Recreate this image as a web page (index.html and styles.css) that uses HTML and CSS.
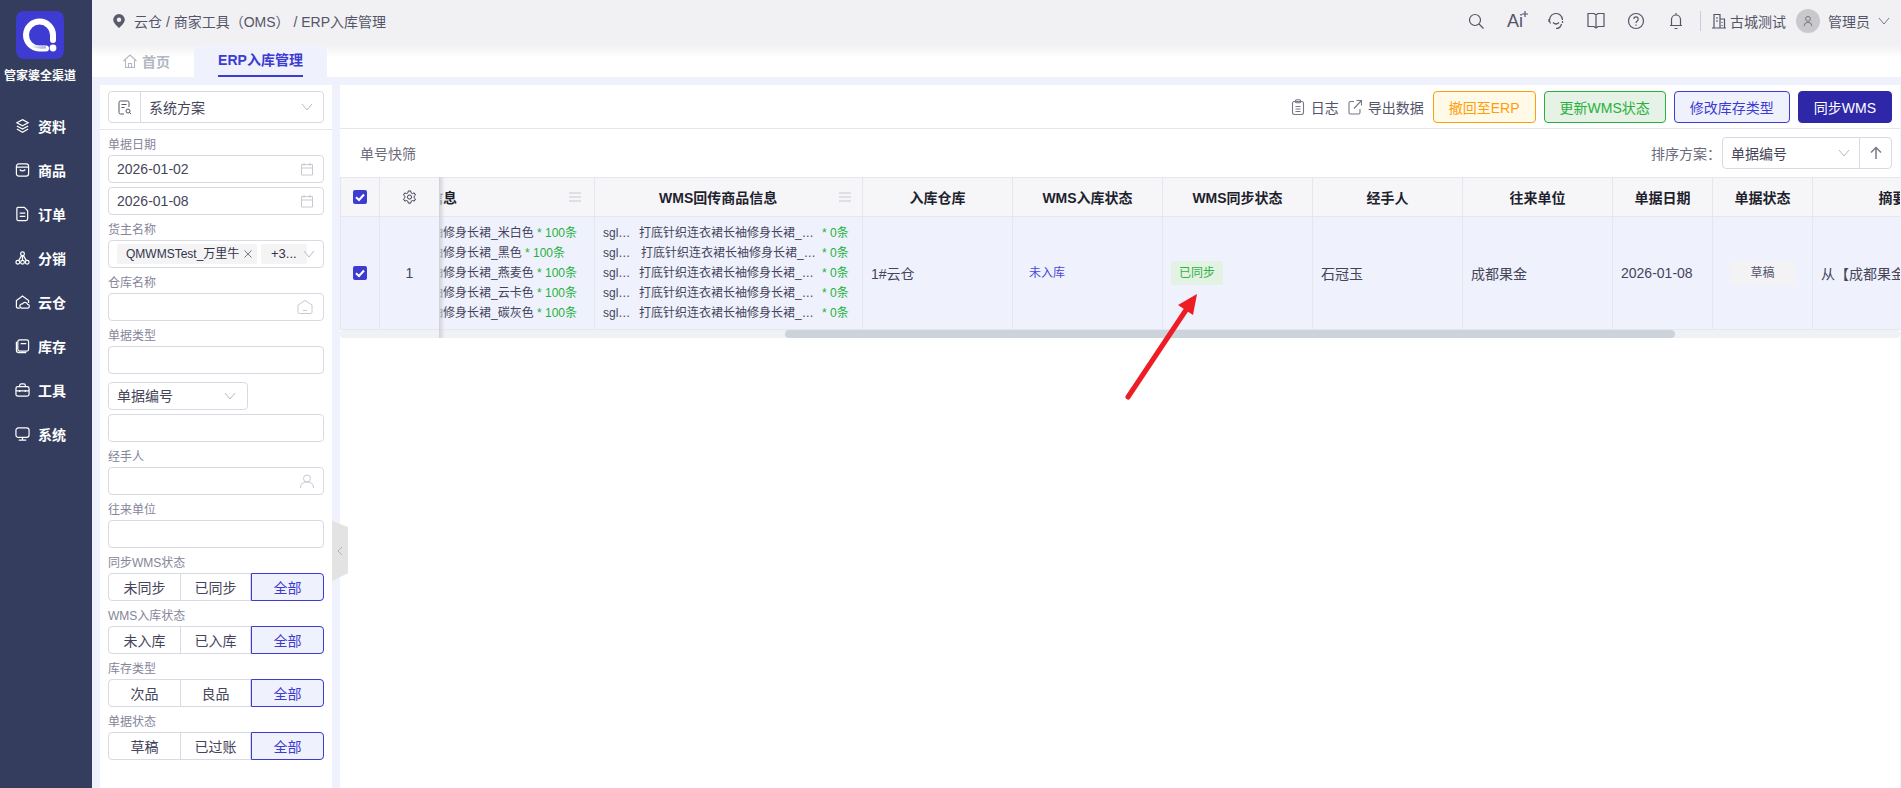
FILE: index.html
```html
<!DOCTYPE html>
<html lang="zh">
<head>
<meta charset="utf-8">
<title>ERP入库管理</title>
<link rel="stylesheet" href="styles.css">
</head>
<body>
<svg class="defs" width="0" height="0">
  <symbol id="chev" viewBox="0 0 12 12"><polyline points="1,3 6,9 11,3" fill="none" stroke="currentColor" stroke-width="1"/></symbol>
  <symbol id="cal" viewBox="0 0 14 14"><path d="M1.5 2.5h11v10.5h-11zM1.5 6h11M4 .8v3M10 .8v3" fill="none" stroke="currentColor" stroke-width="1"/></symbol>
  <symbol id="menu" viewBox="0 0 12 12"><path d="M0 2h12M0 6h12M0 10h12" stroke="currentColor" stroke-width="1.4"/></symbol>
  <symbol id="check" viewBox="0 0 14 14"><rect width="14" height="14" rx="2" fill="#3d3bd1"/><polyline points="3,7.2 6,10 11,4.5" fill="none" stroke="#fff" stroke-width="2"/></symbol>
</svg>
<div class="app">
  <aside class="sidebar">
    <svg class="logo" viewBox="0 0 48 48">
      <defs><linearGradient id="lg" x1="0" y1="0" x2="1" y2="1"><stop offset="0.45" stop-color="#fff"/><stop offset="1" stop-color="#8f8ee0"/></linearGradient></defs>
      <rect width="48" height="48" rx="8" fill="#3d3bd1"/>
      <path d="M30 37.5H23A13.5 13.5 0 1 1 37 24V29" fill="none" stroke="#fff" stroke-width="6" stroke-linecap="round"/>
      <path d="M12 31Q16 37 30 36" fill="none" stroke="url(#lg)" stroke-width="3" opacity=".7"/>
      <circle cx="37" cy="37" r="3.4" fill="#fff"/>
    </svg>
    <div class="brand">管家婆全渠道</div>
    <nav class="nav">
      <a class="nav-item"><svg viewBox="0 0 16 16"><path d="M8 1.2l6 3.3-6 3.3-6-3.3zM2 8l6 3.3L14 8M2 11.2l6 3.4 6-3.4"/></svg>资料</a>
      <a class="nav-item"><svg viewBox="0 0 16 16"><rect x="1.5" y="1.5" width="13" height="13" rx="2.5"/><path d="M1.5 5h13M5 7.5q3 3 6 0"/></svg>商品</a>
      <a class="nav-item"><svg viewBox="0 0 16 16"><path d="M3 1h7l3.5 3.5V13a2 2 0 0 1-2 2H3.5a1.500 1.500 0 0 1-1.500-1.500V2a1 1 0 0 1 1-1zM5 7h6M5 10.500h6"/></svg>订单</a>
      <a class="nav-item"><svg viewBox="0 0 16 16"><circle cx="8" cy="3.500" r="2"/><circle cx="3" cy="12.500" r="2"/><circle cx="8" cy="12.500" r="2"/><circle cx="13" cy="12.500" r="2"/><path d="M8 5.500v5M4 10.500l3-5M12 10.500l-3-5"/></svg>分销</a>
      <a class="nav-item"><svg viewBox="0 0 16 16"><path d="M5 14.500H3a1.500 1.500 0 0 1-1.500-1.500V6.500L8 1.500l6.500 5V9M7 14.500h6a2 2 0 0 0 .5-4 3 3 0 0 0-5.500-.5 2.300 2.300 0 0 0-1 4.500z"/></svg>云仓</a>
      <a class="nav-item"><svg viewBox="0 0 16 16"><rect x="3" y="1.500" width="11.500" height="12" rx="2"/><path d="M6 5.500h6M1.500 3.500v9a2.500 2.500 0 0 0 2.500 2.500h8"/></svg>库存</a>
      <a class="nav-item"><svg viewBox="0 0 16 16"><rect x="1" y="4.500" width="14" height="10" rx="2"/><path d="M5 4.500V3a1.500 1.500 0 0 1 1.500-1.500h3A1.500 1.500 0 0 1 11 3v1.500M1 9h14M5 8v2M11 8v2"/></svg>工具</a>
      <a class="nav-item"><svg viewBox="0 0 16 16"><rect x="1" y="1.500" width="14" height="10" rx="2.500"/><path d="M8 11.500v3M4 14.500h8"/></svg>系统</a>
    </nav>
  </aside>

  <div class="main">
    <header class="topbar">
      <svg class="pin" viewBox="0 0 12 14"><path d="M6 0a5.800 5.800 0 0 1 5.800 5.800C11.800 9.500 6 14 6 14S.2 9.500.2 5.800A5.800 5.800 0 0 1 6 0z" fill="#5a5a6e"/><circle cx="6" cy="5.800" r="2.200" fill="#f1f1f3"/></svg>
      <div class="crumb">云仓 / 商家工具（OMS） / ERP入库管理</div>
      <div class="top-tools">
        <svg class="ti" viewBox="0 0 18 18"><circle cx="8" cy="8" r="5.500"/><path d="M12 12l4.500 4.500"/></svg>
        <span class="ai">Ai<svg viewBox="0 0 8 8"><path d="M4 0v8M0 4h8" stroke="#55556a" stroke-width="1.600"/></svg></span>
        <svg class="ti" viewBox="0 0 18 18"><path d="M3.500 11.500A6.500 6.500 0 1 1 15.500 8M2 7v3M6 10.500q3 3 6 0M9 16.500q4.500 0 5.500-4.500M15.500 9v2"/></svg>
        <svg class="ti" viewBox="0 0 18 18"><path d="M1 1.500h6L9 3l2-1.500h6V14.500h-6L9 16l-2-1.500H1zM9 3v13"/></svg>
        <svg class="ti" viewBox="0 0 18 18"><circle cx="9" cy="9" r="7.500"/><path d="M6.800 7a2.200 2.200 0 1 1 3.400 1.900q-1.200.7-1.200 2M9 12.500v1.200"/></svg>
        <svg class="ti" viewBox="0 0 18 18"><path d="M4.500 13V7.500a4.500 4.500 0 0 1 9 0V13M3 13.500h12M7.500 16.500h3M9 1v2"/></svg>
        <span class="vline"></span>
        <svg class="ti bld" viewBox="0 0 16 16"><path d="M3 15V1.500h6V15M9 6h4.500v9M1 15h14M5 5h2M5 8h2M11 9v1M11 12v1"/></svg>
        <span class="co">古城测试</span>
        <span class="avatar"><svg viewBox="0 0 14 14"><circle cx="7" cy="4.500" r="2.800"/><path d="M2.500 13q0-4.500 4.500-4.500t4.500 4.500"/></svg></span>
        <span class="user">管理员</span>
        <svg class="chev user-chev"><use href="#chev"/></svg>
      </div>
    </header>

    <div class="tabs">
      <a class="tab"><svg viewBox="0 0 14 14"><path d="M.5 7L7 1l6.500 6M2.500 6v7.500h9V6M5.500 13.500V9.500h3v4"/></svg>首页</a>
      <a class="tab active"><span>ERP入库管理</span></a>
    </div>

    <div class="content">
      <section class="filters">
        <div class="scheme">
          <span class="scheme-icon"><svg viewBox="0 0 14 15"><path d="M6 14H2.500A1.500 1.500 0 0 1 1 12.500v-10A1.500 1.500 0 0 1 2.500 1h7A1.500 1.500 0 0 1 11 2.500V7M3.500 4.500h5M3.500 7.500h3"/><circle cx="10" cy="11" r="2"/><path d="M11.500 12.500L13 14"/></svg></span>
          <span class="scheme-text">系统方案</span>
          <svg class="chev"><use href="#chev"/></svg>
        </div>
        <div class="form">
          <div class="lbl">单据日期</div>
          <div class="inp">2026-01-02<svg class="ic"><use href="#cal"/></svg></div>
          <div class="inp mt4">2026-01-08<svg class="ic"><use href="#cal"/></svg></div>

          <div class="lbl">货主名称</div>
          <div class="inp tags">
            <span class="tag t1">QMWMSTest_万里牛<svg viewBox="0 0 8 8"><path d="M.5 .5l7 7M7.500 .5l-7 7" stroke="#77778a" fill="none"/></svg></span>
            <span class="tag t2">+3...</span>
            <svg class="chev"><use href="#chev"/></svg>
          </div>

          <div class="lbl">仓库名称</div>
          <div class="inp"><svg class="ic wide" viewBox="0 0 16 14"><path d="M1 5l7-4.500L15 5v7a1.500 1.500 0 0 1-1.500 1.500h-11A1.500 1.500 0 0 1 1 12zM6 10.500h4" fill="none" stroke="currentColor"/></svg></div>

          <div class="lbl">单据类型</div>
          <div class="inp"></div>

          <div class="inp sel mt8">单据编号<svg class="chev"><use href="#chev"/></svg></div>
          <div class="inp mt4"></div>

          <div class="lbl">经手人</div>
          <div class="inp"><svg class="ic" viewBox="0 0 14 14"><circle cx="7" cy="4.500" r="3.500" fill="none" stroke="currentColor"/><path d="M.5 14q0-6 6.500-6t6.500 6" fill="none" stroke="currentColor"/></svg></div>

          <div class="lbl">往来单位</div>
          <div class="inp"></div>

          <div class="lbl">同步WMS状态</div>
          <div class="seg"><span>未同步</span><span>已同步</span><span class="on">全部</span></div>
          <div class="lbl">WMS入库状态</div>
          <div class="seg"><span>未入库</span><span>已入库</span><span class="on">全部</span></div>
          <div class="lbl">库存类型</div>
          <div class="seg"><span>次品</span><span>良品</span><span class="on">全部</span></div>
          <div class="lbl">单据状态</div>
          <div class="seg"><span>草稿</span><span>已过账</span><span class="on">全部</span></div>
        </div>
      </section>

      <div class="handle"><svg viewBox="0 0 6 10"><polyline points="5,1 1,5 5,9" fill="none" stroke="#b5b5be"/></svg></div>

      <section class="panel">
        <div class="toolbar">
          <a class="link"><svg viewBox="0 0 14 16"><rect x="1.500" y="2.500" width="11" height="13" rx="2"/><rect x="4.500" y=".8" width="5" height="3" rx="1"/><path d="M4.500 7.500h5M4.500 10h5M4.500 12.500h5"/></svg>日志</a>
          <a class="link"><svg viewBox="0 0 14 16"><path d="M6 2.500H2.500a1.500 1.500 0 0 0-1.500 1.500v9.500A1.500 1.500 0 0 0 2.500 15h8a1.500 1.500 0 0 0 1.500-1.500V10M6 9.500L13 2M8.500 1.500H13.500V6.500"/></svg>导出数据</a>
          <button class="btn orange">撤回至ERP</button>
          <button class="btn green">更新WMS状态</button>
          <button class="btn blue">修改库存类型</button>
          <button class="btn solid">同步WMS</button>
        </div>
        <div class="filterbar">
          <span class="quick">单号快筛</span>
          <span class="sort-lbl">排序方案：</span>
          <div class="sort">
            <span class="sort-text">单据编号</span>
            <svg class="chev"><use href="#chev"/></svg>
            <span class="sort-btn"><svg viewBox="0 0 12 14"><path d="M6 13V1.500M1 6.500l5-5 5 5" fill="none" stroke="#7a7a8a" stroke-width="1.500"/></svg></span>
          </div>
        </div>

        <div class="table-wrap">
          <div class="grid">
            <div class="th"><svg class="cb"><use href="#check"/></svg></div>
            <div class="th"><svg class="gear" viewBox="0 0 16 16"><path d="M6.700 1h2.600l.4 2 1.500.8 1.900-.7 1.300 2.300-1.500 1.300v1.600l1.500 1.300-1.300 2.300-1.900-.7-1.500.8-.4 2H6.700l-.4-2-1.500-.8-1.900.7L1.600 9.600l1.500-1.300V6.700L1.600 5.400l1.300-2.300 1.900.7 1.500-.8z" fill="none" stroke="#33334a"/><circle cx="8" cy="7.500" r="2.200" fill="none" stroke="#33334a"/></svg></div>
            <div class="th th-clip"><span class="clip-title">商品信息</span><svg class="mn"><use href="#menu"/></svg></div>
            <div class="th th-wms"><span>WMS回传商品信息</span><svg class="mn"><use href="#menu"/></svg></div>
            <div class="th">入库仓库</div>
            <div class="th">WMS入库状态</div>
            <div class="th">WMS同步状态</div>
            <div class="th">经手人</div>
            <div class="th">往来单位</div>
            <div class="th">单据日期</div>
            <div class="th">单据状态</div>
            <div class="th">摘要</div>

            <div class="td center"><svg class="cb"><use href="#check"/></svg></div>
            <div class="td center">1</div>
            <div class="td lines clipped">
              <div class="ln"><span>打底针织连衣裙长袖修身长裙_米白色</span><b> * 100条</b></div>
              <div class="ln"><span>打底针织连衣裙长袖修身长裙_黑色</span><b> * 100条</b></div>
              <div class="ln"><span>打底针织连衣裙长袖修身长裙_燕麦色</span><b> * 100条</b></div>
              <div class="ln"><span>打底针织连衣裙长袖修身长裙_云卡色</span><b> * 100条</b></div>
              <div class="ln"><span>打底针织连衣裙长袖修身长裙_碳灰色</span><b> * 100条</b></div>
            </div>
            <div class="td lines wms">
              <div class="wl"><i>sgl…</i><span>打底针织连衣裙长袖修身长裙_…</span><b>* 0条</b></div>
              <div class="wl nudge"><i>sgl…</i><span>打底针织连衣裙长袖修身长裙_…</span><b>* 0条</b></div>
              <div class="wl"><i>sgl…</i><span>打底针织连衣裙长袖修身长裙_…</span><b>* 0条</b></div>
              <div class="wl"><i>sgl…</i><span>打底针织连衣裙长袖修身长裙_…</span><b>* 0条</b></div>
              <div class="wl"><i>sgl…</i><span>打底针织连衣裙长袖修身长裙_…</span><b>* 0条</b></div>
            </div>
            <div class="td">1#云仓</div>
            <div class="td"><span class="pill p-blue">未入库</span></div>
            <div class="td"><span class="pill p-green">已同步</span></div>
            <div class="td">石冠玉</div>
            <div class="td">成都果金</div>
            <div class="td">2026-01-08</div>
            <div class="td center"><span class="pill p-gray">草稿</span></div>
            <div class="td nowrap">从【成都果金】采购入库</div>
          </div>
          <div class="scrollbar"><span class="thumb"></span></div>
          <span class="freeze"></span>
        </div>
      </section>

      <svg class="arrow" viewBox="0 0 90 120"><path d="M8 115L68 25" stroke="#ee1c25" stroke-width="5" stroke-linecap="round" fill="none"/><polygon points="77,12 58,23 73,33" fill="#ee1c25"/></svg>
    </div>
  </div>
</div>
</body>
</html>
```
FILE: styles.css
```css
* { box-sizing: border-box; }
html, body { margin: 0; height: 100%; overflow: hidden; }
body {
  font-family: "Liberation Sans", "Noto Sans CJK SC", sans-serif;
  font-size: 14px;
  color: #45455a;
  background: #fff;
}
.defs { position: absolute; }
.app { display: flex; height: 788px; }

/* sidebar */
.sidebar { width: 92px; flex: none; background: #343d5e; padding-top: 11px; display: flex; flex-direction: column; align-items: flex-start; }
.logo { width: 48px; height: 48px; display: block; margin-left: 16px; }
.brand { margin: 9px 0 0 4px; color: #fff; font-size: 12px; font-weight: 700; line-height: 16px; white-space: nowrap; }
.nav { margin-top: 20px; width: 100%; }
.nav-item { height: 44px; display: flex; align-items: center; padding-left: 15px; gap: 8px; color: #fff; font-weight: 700; font-size: 14px; }
.nav-item svg { width: 15px; height: 16px; fill: none; stroke: #fff; stroke-width: 1.3; flex: none; }

.main { flex: 1; min-width: 0; display: flex; flex-direction: column; position: relative; }

/* topbar */
.topbar { height: 45px; flex: none; background: #f1f1f3; display: flex; align-items: center; padding: 0 11px 3px 21px; }
.pin { width: 12px; height: 14px; flex: none; }
.crumb { margin-left: 9px; color: #55556a; white-space: pre; }
.top-tools { margin-left: auto; display: flex; align-items: center; color: #55556a; }
.ti { width: 18px; height: 18px; fill: none; stroke: #55556a; stroke-width: 1.2; margin-right: 22px; flex: none; }
.ai { width: 18px; margin-right: 22px; font-size: 18px; line-height: 20px; position: relative; white-space: nowrap; }
.ai svg { width: 6px; height: 6px; position: absolute; left: 15px; top: 0; }
.vline { width: 1px; height: 20px; background: #c5cbe8; margin-left: -7px; margin-right: 10px; }
.ti.bld { width: 16px; height: 16px; margin-right: 3px; }
.co { width: 56px; white-space: nowrap; }
.avatar { width: 24px; height: 24px; border-radius: 50%; background: #c9c9cc; margin-left: 10px; display: flex; align-items: center; justify-content: center; }
.avatar svg { width: 12px; height: 12px; fill: none; stroke: #66667a; }
.user { margin-left: 8px; white-space: nowrap; }
.chev { width: 12px; height: 12px; color: #b9b9c6; flex: none; }
.user-chev { margin-left: 8px; color: #77778a; }

/* tabs */
.tabs { height: 32px; flex: none; display: flex; background: linear-gradient(#f1f1f3, #fff 12px); padding-left: 8px; }
.tab { display: flex; align-items: center; gap: 5px; color: #b3b7c4; font-weight: 700; }
.tab:first-child { width: 94px; padding-left: 23px; }
.tab svg { width: 14px; height: 14px; fill: none; stroke: #b3b7c4; stroke-width: 1.1; }
.tab.active { width: 133px; background: #eff1fd; border-radius: 8px 8px 0 0; justify-content: center; color: #3d3bd1; align-items: stretch; }
.tab.active span { border-bottom: 2px solid #3d3bd1; line-height: 30px; height: 32px; }

/* content */
.content { flex: 1; min-height: 0; display: flex; gap: 8px; padding: 8px 1px 0 8px; background: #eff1fd; position: relative; }
.filters { width: 232px; flex: none; background: #fff; }
.scheme { margin: 6px 8px; height: 32px; border: 1px solid #d9d9e3; border-radius: 4px; display: flex; align-items: center; padding-right: 10px; }
.scheme-icon { width: 32px; height: 30px; border-right: 1px solid #d9d9e3; display: flex; align-items: center; justify-content: center; }
.scheme-icon svg { width: 14px; height: 15px; fill: none; stroke: #55556a; }
.scheme-text { margin-left: 8px; flex: 1; }
.form { border-top: 1px solid #e6e6ee; padding: 0 8px; }
.lbl { height: 25px; padding-top: 7px; line-height: 17px; font-size: 12px; color: #85859a; }
.inp { height: 28px; border: 1px solid #d9d9e3; border-radius: 4px; padding: 0 8px; display: flex; align-items: center; line-height: 26px; }
.mt4 { margin-top: 4px; }
.mt8 { margin-top: 8px; }
.ic { width: 14px; height: 14px; color: #c8c8d2; margin-left: auto; margin-right: 1px; flex: none; }
.ic.wide { width: 16px; margin-right: 2px; }
.sel { width: 140px; justify-content: space-between; padding-right: 11px; }
.tags { gap: 4px; padding-right: 0; }
.tags .chev { margin-left: -8px; }
.tag { height: 20px; background: #f4f4f5; border-radius: 2px; line-height: 20px; white-space: nowrap; font-size: 12px; color: #33334a; display: flex; align-items: center; flex: none; }
.tag svg { width: 8px; height: 8px; margin-left: 5px; flex: none; }
.t1 { width: 140px; padding-left: 9px; }
.t2 { width: 46px; padding-left: 10px; font-size: 13px; }
.seg { height: 28px; display: grid; grid-template-columns: 72px 70px 72px; border: 1px solid #d9d9e3; border-radius: 4px; }
.seg span { display: flex; align-items: center; justify-content: center; border-right: 1px solid #d9d9e3; }
.seg span.on { margin: -1px -1px -1px 0; background: #eff1fd; border: 1px solid #3d3bd1; border-radius: 0 4px 4px 0; color: #3d3bd1; }

.handle { position: absolute; left: 240px; top: 444px; width: 16px; height: 60px; background: #e3e3e3; clip-path: polygon(0 0, 100% 10%, 100% 87%, 0 100%); display: flex; align-items: center; justify-content: center; }
.handle svg { width: 6px; height: 10px; }

/* panel */
.panel { flex: 1; min-width: 0; background: #fff; display: flex; flex-direction: column; }
.toolbar { height: 44px; flex: none; border-bottom: 1px solid #e6e6ee; display: flex; align-items: flex-start; justify-content: flex-end; padding: 6px 8px 0 0; gap: 8px; }
.link { height: 32px; display: flex; align-items: center; gap: 6px; color: #55556a; margin-right: 1px; }
.link svg { width: 14px; height: 16px; fill: none; stroke: #77778a; stroke-width: 1.1; }
.btn { height: 32px; padding: 0 15px; border: 1px solid; border-radius: 4px; font: inherit; white-space: nowrap; }
.orange { border-color: #ff9d0a; background: #fff9e8; color: #ff9d0a; }
.green { border-color: #28b03c; background: #e5f2e5; color: #28b03c; }
.blue { border-color: #3d3bd1; background: #eff1fd; color: #3d3bd1; }
.solid { border-color: #2e27a8; background: #2e27a8; color: #fff; }

.filterbar { height: 48px; flex: none; display: flex; align-items: center; padding: 0 8px 0 20px; }
.quick { color: #6b6b7d; }
.sort-lbl { margin-left: auto; color: #6b6b7d; width: 71px; white-space: nowrap; }
.sort { width: 170px; height: 32px; border: 1px solid #d9d9e3; border-radius: 4px; display: flex; align-items: center; padding-left: 8px; }
.sort-text { flex: 1; }
.sort-btn { width: 32px; height: 30px; margin-left: 9px; border-left: 1px solid #d9d9e3; display: flex; align-items: center; justify-content: center; }
.sort-btn svg { width: 12px; height: 14px; }

/* table */
.table-wrap { position: relative; }
.grid { display: grid; grid-template-columns: 40px 60px 155px 268px 150px 150px 150px 150px 150px 100px 100px 160px; grid-template-rows: 40px 113px; overflow: hidden; }
.th { background: #f6f6f9; border-top: 1px solid #e6e6ee; border-bottom: 1px solid #e6e6ee; border-right: 1px solid #e6e6ee; display: flex; align-items: center; justify-content: center; color: #1f1f2e; font-weight: 700; white-space: nowrap; }
.th:first-child, .td:nth-child(13) { border-left: 1px solid #e6e6ee; }
.th-clip { justify-content: flex-start; overflow: hidden; padding-right: 13px; }
.clip-title { margin-left: -39px; flex: none; }
.th-wms { justify-content: flex-start; padding-right: 11px; }
.th-wms span { margin-left: 64px; }
.mn { width: 12px; height: 12px; color: #d8d8de; margin-left: auto; flex: none; }
.cb { width: 14px; height: 14px; display: block; }
.gear { width: 15px; height: 15px; }
.td { background: #eff1fd; border-bottom: 1px solid #e6e6ee; border-right: 1px solid #e6e6ee; display: flex; align-items: center; padding-left: 8px; overflow: hidden; }
.center { justify-content: center; padding-left: 0; }
.nowrap { white-space: nowrap; }
.lines { flex-direction: column; align-items: flex-start; justify-content: center; font-size: 12px; line-height: 20px; }
.clipped { padding-left: 0; }
.wms { padding-left: 8px; }
.ln { margin-left: -105px; white-space: nowrap; }
.ln b, .wl b { font-weight: 400; color: #23b33c; }
.wl { display: flex; white-space: nowrap; width: 100%; }
.wl i { font-style: normal; width: 36px; flex: none; }
.wl span { width: 183px; flex: none; }
.nudge span { padding-left: 2px; }
.pill { height: 24px; line-height: 24px; border-radius: 2px; font-size: 12px; padding: 0 8px; display: block; }
.p-blue { color: #4a48d8; }
.p-green { background: #e3f2e3; color: #2fb344; width: 52px; text-align: center; }
.p-gray { background: #f3f3f6; color: #55556a; width: 66px; text-align: center; }
.scrollbar { height: 8px; background: #f0f1f4; border-radius: 4px; padding-left: 445px; }
.thumb { display: block; width: 890px; height: 8px; background: #ccd3db; border-radius: 4px; }
.freeze { position: absolute; left: 99px; top: 0; bottom: 0; width: 6px; background: linear-gradient(to right, #d2d2d6, rgba(210, 210, 214, 0)); }

.arrow { position: absolute; left: 1028px; top: 205px; width: 90px; height: 120px; }
```
